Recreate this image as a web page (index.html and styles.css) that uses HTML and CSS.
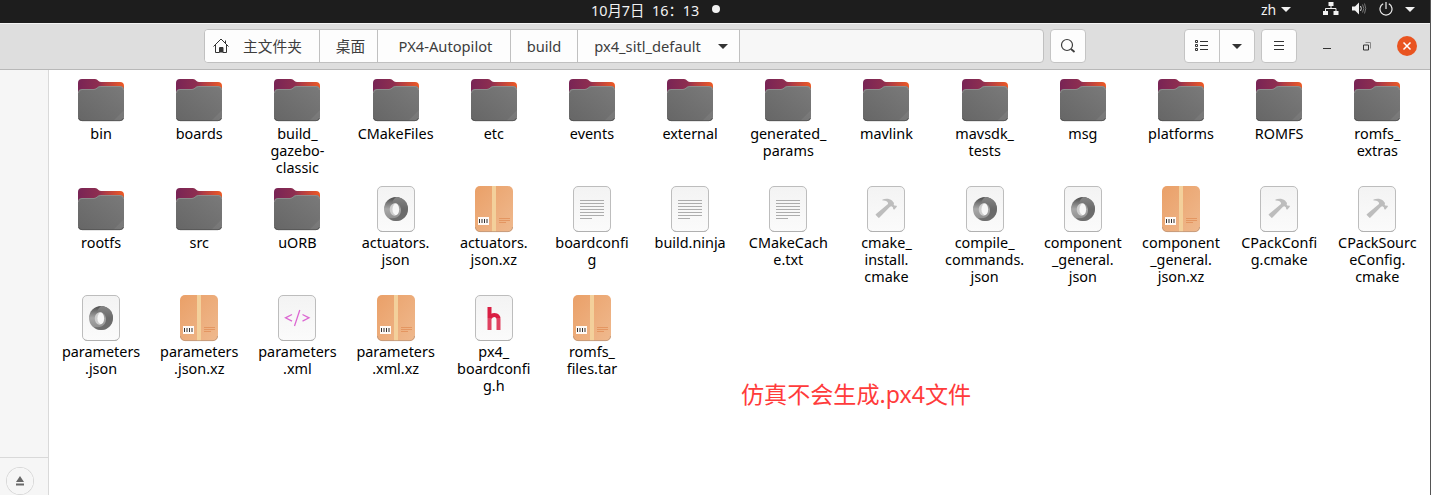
FILE: index.html
```html
<!DOCTYPE html>
<html lang="zh">
<head>
<meta charset="utf-8">
<title>px4_sitl_default</title>
<link rel="stylesheet" href="styles.css">
</head>
<body>
<svg class="defs" width="0" height="0" aria-hidden="true">
  <defs>
    <linearGradient id="gBack" x1="0" x2="1"><stop offset="0" stop-color="#782455"/><stop offset=".45" stop-color="#8e2e50"/><stop offset=".6" stop-color="#b03d45"/><stop offset="1" stop-color="#ef5a24"/></linearGradient>
    <linearGradient id="gFront" x1="0" y1="1" x2="1" y2="0"><stop offset="0" stop-color="#666"/><stop offset="1" stop-color="#7a7a7a"/></linearGradient>
    <linearGradient id="gBox" x1="0" y1="0" x2="1" y2="1"><stop offset="0" stop-color="#eaa068"/><stop offset="1" stop-color="#efb98e"/></linearGradient>
    <linearGradient id="gPaper" x1="0" y1="0" x2="0" y2="1"><stop offset="0" stop-color="#f3f3f3"/><stop offset="1" stop-color="#fbfbfb"/></linearGradient>
    <linearGradient id="gRingA" x1="0" y1="0" x2="0" y2="1"><stop offset="0" stop-color="#4a4a4a"/><stop offset=".5" stop-color="#a8a8a8"/><stop offset="1" stop-color="#8a8a8a"/></linearGradient>
    <linearGradient id="gRingB" x1="0" y1="0" x2="0" y2="1"><stop offset="0" stop-color="#858585"/><stop offset=".5" stop-color="#6a6a6a"/><stop offset="1" stop-color="#6e6e6e"/></linearGradient>
    <symbol id="folder" viewBox="0 0 48 48">
      <path d="M1 7a4 4 0 0 1 4-4h13c3 0 3 3 6 3h19a4 4 0 0 1 4 4v13H1z" fill="url(#gBack)"/>
      <path d="M1 17a4 4 0 0 1 4-4h12c3 0 3.500-3 6.500-3H43a4 4 0 0 1 4 4v27a4 4 0 0 1-4 4H5a4 4 0 0 1-4-4z" fill="url(#gFront)"/>
      <path d="M1.500 17a3.500 3.500 0 0 1 3.500-3.500h12c3 0 3.500-3 6.500-3H43a3.500 3.500 0 0 1 3.500 3.500" fill="none" stroke="#969696" stroke-width=".7"/>
      <path d="M47 34v7a4 4 0 0 1-4 4h-7z" fill="#fff" opacity=".06"/>
      <path d="M1.500 42a4 4 0 0 0 3.500 2.700h38a4 4 0 0 0 3.500-2.700" fill="none" stroke="#505050" stroke-width=".8"/>
    </symbol>
    <symbol id="paper" viewBox="0 0 48 48">
      <rect x="5.500" y="1.500" width="37" height="45" rx="4.500" fill="url(#gPaper)" stroke="#bdbdbd"/>
      <path d="M7 45q1 1.500 3.500 1.500h27q2.500 0 3.500-1.500" fill="none" stroke="#acacac" stroke-width=".8"/>
    </symbol>
    <symbol id="json" viewBox="0 0 48 48">
      <use href="#paper"/>
      <circle cx="24" cy="24" r="12" fill="url(#gRingA)"/>
      <path d="M24 12a12 12 0 0 1 0 24c-3 0-5-1-7-3c10 2 14-5 11-12c-1.500-3-5-3.500-8-1.500C20 15 24 12 24 12z" fill="url(#gRingB)"/>
      <path d="M24 18c-5 0-7 4.500-6 8.500c.8 3 3 4.500 6.500 4.500c-3-1-3.500-4-3.500-6.500c0-3 .5-5.500 3-6.500z" fill="#cdcdcd"/>
      <ellipse cx="23.800" cy="24.200" rx="3.300" ry="6" fill="#f6f6f6"/>
    </symbol>
    <symbol id="box" viewBox="0 0 48 48">
      <rect x="5" y="1" width="38" height="46" rx="5" fill="url(#gBox)"/>
      <path d="M22 1h4v46h-4z" fill="#f3d09b"/>
      <path d="M5.500 42a4.500 4.500 0 0 0 4.500 4.600h28a4.500 4.500 0 0 0 4.500-4.600" fill="none" stroke="#bd9678" stroke-width=".8"/>
      <path d="M8 32h11v8H8z" fill="#fffaf6"/>
      <path d="M9.500 34v4M12 34v4M14.500 34v4M17 34v4" stroke="#333" stroke-width="1"/>
      <path d="M29 33.500h11M29 35.500h11M29 37.500h7" stroke="#e2935d" stroke-width=".9"/>
    </symbol>
    <symbol id="text" viewBox="0 0 48 48">
      <use href="#paper"/>
      <path d="M12 15.500h24M12 18.500h24M12 21.500h24M12 24.500h24M12 27.500h24M12 30.500h24M12 33.500h12" stroke="#a4a4a4" stroke-width=".9"/>
    </symbol>
    <symbol id="hammer" viewBox="0 0 48 48">
      <use href="#paper"/>
      <path d="M20.500 14.500c3-1 7-1 9.500 1l2 2.500l-.3 2l1.300.8l1.200-.3l.8 1l-2.500 3l-1.300-.2l-.2-1.800l-1.500-1.200l-1.500.5L17.500 32.500l-.8.5l-3.200-3.200l.5-.8L26 19c.3-2-1.500-3.500-5.500-3.500z" fill="#bdbdbd"/>
    </symbol>
    <symbol id="xml" viewBox="0 0 48 48">
      <use href="#paper"/>
      <path d="M19 20.500l-6.500 3.300l6.500 3.400M29.500 20.500l6.500 3.300l-6.500 3.400M26.800 16l-5.300 16" fill="none" stroke="#dc68d2" stroke-width="1.300"/>
    </symbol>
    <symbol id="header" viewBox="0 0 48 48">
      <use href="#paper"/>
      <path d="M19.500 13v23M19.500 24.500q2-3.500 5-3.500q4 0 4 4.500v10.500" fill="none" stroke="#d91e43" stroke-width="4"/>
      <path d="M17 24h14v12H17z" fill="#fff" opacity=".16"/>
    </symbol>
    <symbol id="down" viewBox="0 0 10 5"><path d="M0 0h10L5 5z" fill="currentColor"/></symbol>
  </defs>
</svg>

<div class="screen">
  <header class="topbar">
    <div class="clock"><span class="time">10月7日&nbsp; 16：13</span><span class="dot"></span></div>
    <div class="status">
      <span class="lang">zh</span>
      <svg class="caret lang-caret"><use href="#down"/></svg>
      <svg class="net" width="16" height="14" viewBox="0 0 16 14"><path d="M5.500 0h5v4h-5zM0 9h5v4H0zM10.500 9h5v4h-5z" fill="#f2f2f2"/><path d="M8 4v3M2.500 9V6.500h10.500V9" fill="none" stroke="#f2f2f2"/></svg>
      <svg class="vol" width="15" height="14" viewBox="0 0 15 14"><path d="M0 4.500h3L7 .5v12l-4-4H0z" fill="#f2f2f2"/><path d="M8.500 4q1.700 2.500 0 5" fill="none" stroke="#ddd"/><path d="M10.500 2.500q2.700 4 0 8M12.500 1.500q2.500 5 0 10" fill="none" stroke="#777"/></svg>
      <svg class="power" width="14" height="14" viewBox="0 0 14 14"><path d="M4.200 1.800a6 6 0 1 0 5.600 0M7 0v7" fill="none" stroke="#eee" stroke-width="1.200"/></svg>
      <svg class="caret"><use href="#down"/></svg>
    </div>
  </header>

  <div class="headerbar">
    <nav class="pathbar">
      <div class="crumb home"><svg width="16" height="16" viewBox="0 0 16 16"><path d="M.5 8.500L8 1l7.500 7.500M2.500 7v7.500h4v-5h3.500v5h3.500V7M12.500 5V2.500" fill="none" stroke="#333" stroke-width="1"/><path d="M7 9.500h3v5H7z" fill="#333"/></svg><span>主文件夹</span></div>
      <div class="crumb desktop"><span>桌面</span></div>
      <div class="crumb autopilot"><span>PX4-Autopilot</span></div>
      <div class="crumb build"><span>build</span></div>
      <div class="crumb current"><span>px4_sitl_default</span><svg class="caret"><use href="#down"/></svg></div>
    </nav>
    <div class="button search"><svg width="16" height="16" viewBox="0 0 16 16"><circle cx="7" cy="7" r="5.500" fill="none" stroke="#3d3d3d" stroke-width="1.200"/><path d="M11 11l3.500 3" stroke="#3d3d3d" stroke-width="1.800"/></svg></div>
    <div class="views">
      <div class="view"><svg width="14" height="12" viewBox="0 0 14 12"><path d="M.5.5h2v2h-2zM.5 4.500h2v2h-2zM.5 8.500h2v2h-2zM5 1.500h8M5 5.500h8M5 9.500h8" fill="none" stroke="#333"/></svg></div>
      <div class="view"><svg class="caret"><use href="#down"/></svg></div>
    </div>
    <div class="button menu"><svg width="12" height="10" viewBox="0 0 12 10"><path d="M1 .5h10M1 4.500h10M1 8.500h10" stroke="#333"/></svg></div>
    <div class="window-controls">
      <svg class="min" width="8" height="2" viewBox="0 0 8 2"><path d="M0 1.500h8" stroke="#333"/></svg>
      <svg class="max" width="8" height="9" viewBox="0 0 8 9"><path d="M.5 3h5v5h-5z" fill="none" stroke="#333"/><path d="M2.500.5h5v6" fill="none" stroke="#888"/></svg>
      <svg class="close" width="20" height="20" viewBox="0 0 20 20"><circle cx="10" cy="10" r="10" fill="#e95420"/><path d="M6.500 6.500l7 7M13.500 6.500l-7 7" stroke="#fff" stroke-width="1.500"/></svg>
    </div>
  </div>

  <div class="body">
    <aside class="sidebar"><div class="eject"><svg width="8" height="10" viewBox="0 0 8 10"><path d="M4 0l4 6H0zM0 7.500h8v2H0z" fill="#686868"/></svg></div></aside>
    <main class="files">
      <div class="file"><svg><use href="#folder"/></svg><p>bin</p></div>
      <div class="file"><svg><use href="#folder"/></svg><p>boards</p></div>
      <div class="file"><svg><use href="#folder"/></svg><p>build_<br>gazebo-<br>classic</p></div>
      <div class="file"><svg><use href="#folder"/></svg><p>CMakeFiles</p></div>
      <div class="file"><svg><use href="#folder"/></svg><p>etc</p></div>
      <div class="file"><svg><use href="#folder"/></svg><p>events</p></div>
      <div class="file"><svg><use href="#folder"/></svg><p>external</p></div>
      <div class="file"><svg><use href="#folder"/></svg><p>generated_<br>params</p></div>
      <div class="file"><svg><use href="#folder"/></svg><p>mavlink</p></div>
      <div class="file"><svg><use href="#folder"/></svg><p>mavsdk_<br>tests</p></div>
      <div class="file"><svg><use href="#folder"/></svg><p>msg</p></div>
      <div class="file"><svg><use href="#folder"/></svg><p>platforms</p></div>
      <div class="file"><svg><use href="#folder"/></svg><p>ROMFS</p></div>
      <div class="file"><svg><use href="#folder"/></svg><p>romfs_<br>extras</p></div>

      <div class="file"><svg><use href="#folder"/></svg><p>rootfs</p></div>
      <div class="file"><svg><use href="#folder"/></svg><p>src</p></div>
      <div class="file"><svg><use href="#folder"/></svg><p>uORB</p></div>
      <div class="file"><svg><use href="#json"/></svg><p>actuators.<br>json</p></div>
      <div class="file"><svg><use href="#box"/></svg><p>actuators.<br>json.xz</p></div>
      <div class="file"><svg><use href="#text"/></svg><p>boardconfi<br>g</p></div>
      <div class="file"><svg><use href="#text"/></svg><p>build.ninja</p></div>
      <div class="file"><svg><use href="#text"/></svg><p>CMakeCach<br>e.txt</p></div>
      <div class="file"><svg><use href="#hammer"/></svg><p>cmake_<br>install.<br>cmake</p></div>
      <div class="file"><svg><use href="#json"/></svg><p>compile_<br>commands.<br>json</p></div>
      <div class="file"><svg><use href="#json"/></svg><p>component<br>_general.<br>json</p></div>
      <div class="file"><svg><use href="#box"/></svg><p>component<br>_general.<br>json.xz</p></div>
      <div class="file"><svg><use href="#hammer"/></svg><p>CPackConfi<br>g.cmake</p></div>
      <div class="file"><svg><use href="#hammer"/></svg><p>CPackSourc<br>eConfig.<br>cmake</p></div>

      <div class="file"><svg><use href="#json"/></svg><p>parameters<br>.json</p></div>
      <div class="file"><svg><use href="#box"/></svg><p>parameters<br>.json.xz</p></div>
      <div class="file"><svg><use href="#xml"/></svg><p>parameters<br>.xml</p></div>
      <div class="file"><svg><use href="#box"/></svg><p>parameters<br>.xml.xz</p></div>
      <div class="file"><svg><use href="#header"/></svg><p>px4_<br>boardconfi<br>g.h</p></div>
      <div class="file"><svg><use href="#box"/></svg><p>romfs_<br>files.tar</p></div>
      <div class="note">仿真不会生成.px4文件</div>
    </main>
  </div>
</div>
</body>
</html>
```
FILE: styles.css
```css
* { box-sizing: border-box; }
body {
  margin: 0;
  overflow: hidden;
  font-family: "Noto Sans", "Noto Sans CJK SC", sans-serif;
  font-size: 14.4px;
  color: #000;
  background: #fff;
}
svg { display: block; flex: none; }
.defs { position: absolute; }
.screen {
  display: flex;
  flex-direction: column;
  width: 1431px;
  height: 495px;
  border-right: 1px solid #555;
}

.topbar {
  display: flex;
  justify-content: flex-end;
  height: 23px;
  padding-left: 591px;
  background: #1d1d1d;
  color: #f2f2f2;
}
.clock { display: flex; flex: 1; line-height: 21px; font-size: 14.4px; white-space: nowrap; }
.time { width: 121px; }
.dot { width: 8px; height: 8px; margin-top: 5px; border-radius: 50%; background: #f2f2f2; }
.status { display: flex; align-items: flex-start; padding: 3px 15px 0 0; }
.lang { width: 20px; line-height: 14px; font-size: 14px; }
.caret { width: 10px; height: 5px; color: #333; }
.topbar .caret { margin-top: 4px; color: #f2f2f2; }
.topbar .lang-caret { margin-right: 32px; }
.net { margin: -1px 13px 0 0; }
.vol { margin: -1px 12px 0 0; }
.power { margin: -1px 12px 0 0; }

.headerbar {
  display: flex;
  height: 47px;
  padding: 5px 13px 7px 204px;
  border-top: 1px solid #f4f4f4;
  border-bottom: 1px solid #b8b8b8;
  background: #dedede;
  color: #3d3d3d;
}
.pathbar {
  display: flex;
  width: 840px;
  height: 34px;
  border: 1px solid #c0c0c0;
  border-radius: 4px;
  background: #f7f7f7;
  overflow: hidden;
}
.crumb {
  display: flex;
  align-items: center;
  justify-content: center;
  border-right: 1px solid #c0c0c0;
  background: #fdfdfd;
  font-size: 14.7px;
  white-space: nowrap;
}
.crumb span { padding-bottom: 1px; }
.home { width: 115px; gap: 14px; padding-right: 9px; }
.desktop { width: 58px; padding-left: 4px; }
.autopilot { width: 133px; padding-left: 3px; }
.build { width: 67px; }
.current { width: 162px; gap: 17px; padding-left: 5px; }
.button, .views {
  display: flex;
  height: 34px;
  border: 1px solid #c4c4c4;
  border-radius: 4px;
  background: #fdfdfd;
}
.button { width: 36px; align-items: center; justify-content: center; }
.search { margin: 0 98px 0 6px; }
.views { width: 71px; margin-right: 6px; }
.view { display: flex; flex: 1; align-items: center; justify-content: center; }
.view + .view { border-left: 1px solid #c4c4c4; }
.window-controls { display: flex; align-items: flex-start; margin-left: auto; }
.min { margin: 18px 32px 0 0; }
.max { margin: 13px 26px 0 0; }
.close { margin-top: 7px; }

.body { display: flex; flex: 1; min-height: 0; }
.sidebar {
  display: flex;
  align-items: flex-end;
  width: 49px;
  background: #f6f6f6;
  border-right: 1px solid #d9d9d9;
}
.eject {
  display: flex;
  justify-content: center;
  width: 48px;
  height: 38px;
  padding: 18px 8px 0 0;
  border-top: 1px solid #d9d9d9;
  background: radial-gradient(circle at 20px 23px, transparent 13px, #d9d9d9 13.5px, transparent 14.5px);
}
.files {
  position: relative;
  display: grid;
  grid-template-columns: repeat(14, 98.18px);
  grid-auto-rows: 109px;
  align-content: start;
  padding: 6px 0 0 3px;
}
.file { display: flex; flex-direction: column; align-items: center; }
.file svg { width: 48px; height: 48px; }
.file p { margin: 1px 0 0; line-height: 17px; text-align: center; white-space: nowrap; }
.note {
  position: absolute;
  left: 692px;
  top: 308px;
  color: #ff3b3b;
  font-size: 23.1px;
  line-height: 32px;
  white-space: nowrap;
}
```
